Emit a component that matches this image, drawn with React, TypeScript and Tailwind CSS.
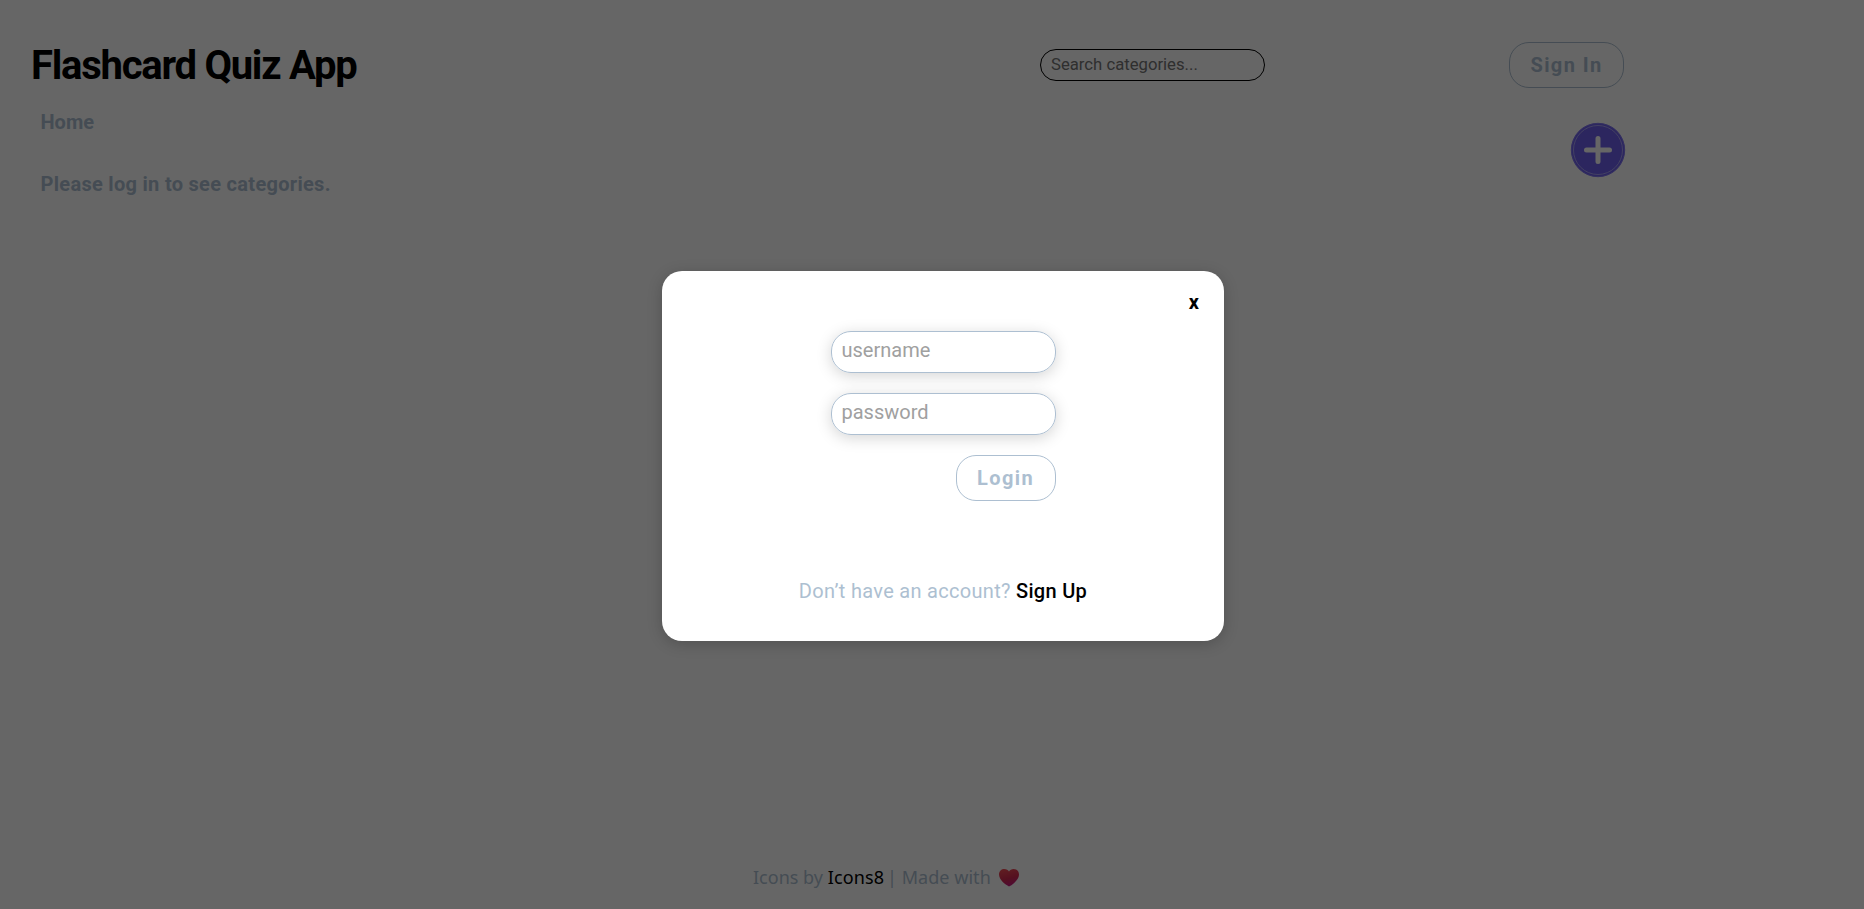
export default function App() {
  return (
    <div className="relative h-[909px] w-full overflow-hidden bg-white font-['Roboto',sans-serif] text-[#adbfd1]">
      <div className="flex h-full flex-col">
        <header className="flex h-[88px] items-start pt-[42px] pl-[30px]">
          <h1 className="mt-px w-[1010px] pl-px text-[40px] leading-[46px] font-bold tracking-[-1.25px] text-black">Flashcard Quiz App</h1>
          <input
            className="mt-[7px] h-8 w-[225px] rounded-[16px] border border-black px-[10px] pb-[2px] text-[16.7px] placeholder:text-[#757575]"
            placeholder="Search categories..."
          />
          <button className="ml-[244px] h-[46px] w-[115px] rounded-[20px] border border-[#adbfd1] text-[20px] font-bold tracking-[1.4px]">Sign In</button>
        </header>
        <main className="flex flex-1 justify-between pl-[40px] pr-[238px]">
          <div className="pt-[22px] pl-[0.5px] text-[20px] leading-6 font-bold">
            <p>Home</p>
            <p className="mt-[38px] tracking-[0.3px]">Please log in to see categories.</p>
          </div>
          <svg className="mt-[34px] size-14" viewBox="0 0 56 56" fill="none">
            <circle cx="28" cy="28" r="26.700" fill="#6e5fee" stroke="#8277f0" strokeWidth="1" />
            <circle cx="28" cy="28" r="24.5" stroke="#aaa3f5" strokeWidth="1" />
            <path d="M28 16.5v23M16.5 28h23" stroke="#fff" strokeWidth="5" strokeLinecap="round" />
          </svg>
        </main>
        <footer className="flex h-[66px] items-start pt-[22px] pl-[753px] font-['Noto_Sans',sans-serif] text-[18px] leading-6">
          <span>Icons by&nbsp;</span>
          <span className="tracking-[0.15px] text-black">Icons8</span>
          <span className="-ml-[2px] tracking-[0.05px]">&nbsp;| Made with</span>
          <svg className="mt-1 ml-[8px] h-[18px] w-5" viewBox="0 0 20 18">
            <defs>
              <linearGradient id="heart" x1="0.3" y1="0" x2="0.6" y2="1">
                <stop offset="0" stopColor="#f04b55" />
                <stop offset="0.55" stopColor="#d42a50" />
                <stop offset="1" stopColor="#c61a88" />
              </linearGradient>
            </defs>
            <path d="M10 17.5C6 15.500 0 10.500 0 5.500 0 2 2.500 0 5.300 0 7.500 0 9.200 1.200 10 2.600 10.800 1.200 12.500 0 14.700 0 17.500 0 20 2 20 5.500 20 10.500 14 15.500 10 17.500Z" fill="url(#heart)" />
          </svg>
        </footer>
      </div>
      <div className="absolute inset-0 bg-black/60 pt-[271px] pl-[662px]">
        <section className="flex h-[370px] w-[562px] flex-col items-center rounded-[20px] bg-white shadow-[0_3px_15px_rgba(0,0,0,0.2)]">
          <button className="mt-[18px] mr-[25px] h-[26px] self-end text-[20px] leading-[26px] font-bold text-black">x</button>
          <form className="mt-[16px] flex w-[225px] flex-col gap-5">
            <input className="h-[42px] rounded-[20px] border border-[#adbfd1] px-[10px] pb-[4px] text-[20px] shadow-[0_3px_15px_rgba(0,0,0,0.17)] placeholder:text-[#a0a0a0]" placeholder="username" />
            <input className="h-[42px] rounded-[20px] border border-[#adbfd1] px-[10px] pb-[4px] text-[20px] shadow-[0_3px_15px_rgba(0,0,0,0.17)] placeholder:text-[#a0a0a0]" placeholder="password" />
            <button className="h-[46px] w-[100px] self-end rounded-[20px] border border-[#adbfd1] text-[20px] font-bold tracking-[1.4px]">Login</button>
          </form>
          <p className="mt-[78px] text-[20px] leading-6 tracking-[0.3px]">
            Don’t have an account? <span className="font-medium text-black">Sign Up</span>
          </p>
        </section>
      </div>
    </div>
  );
}
